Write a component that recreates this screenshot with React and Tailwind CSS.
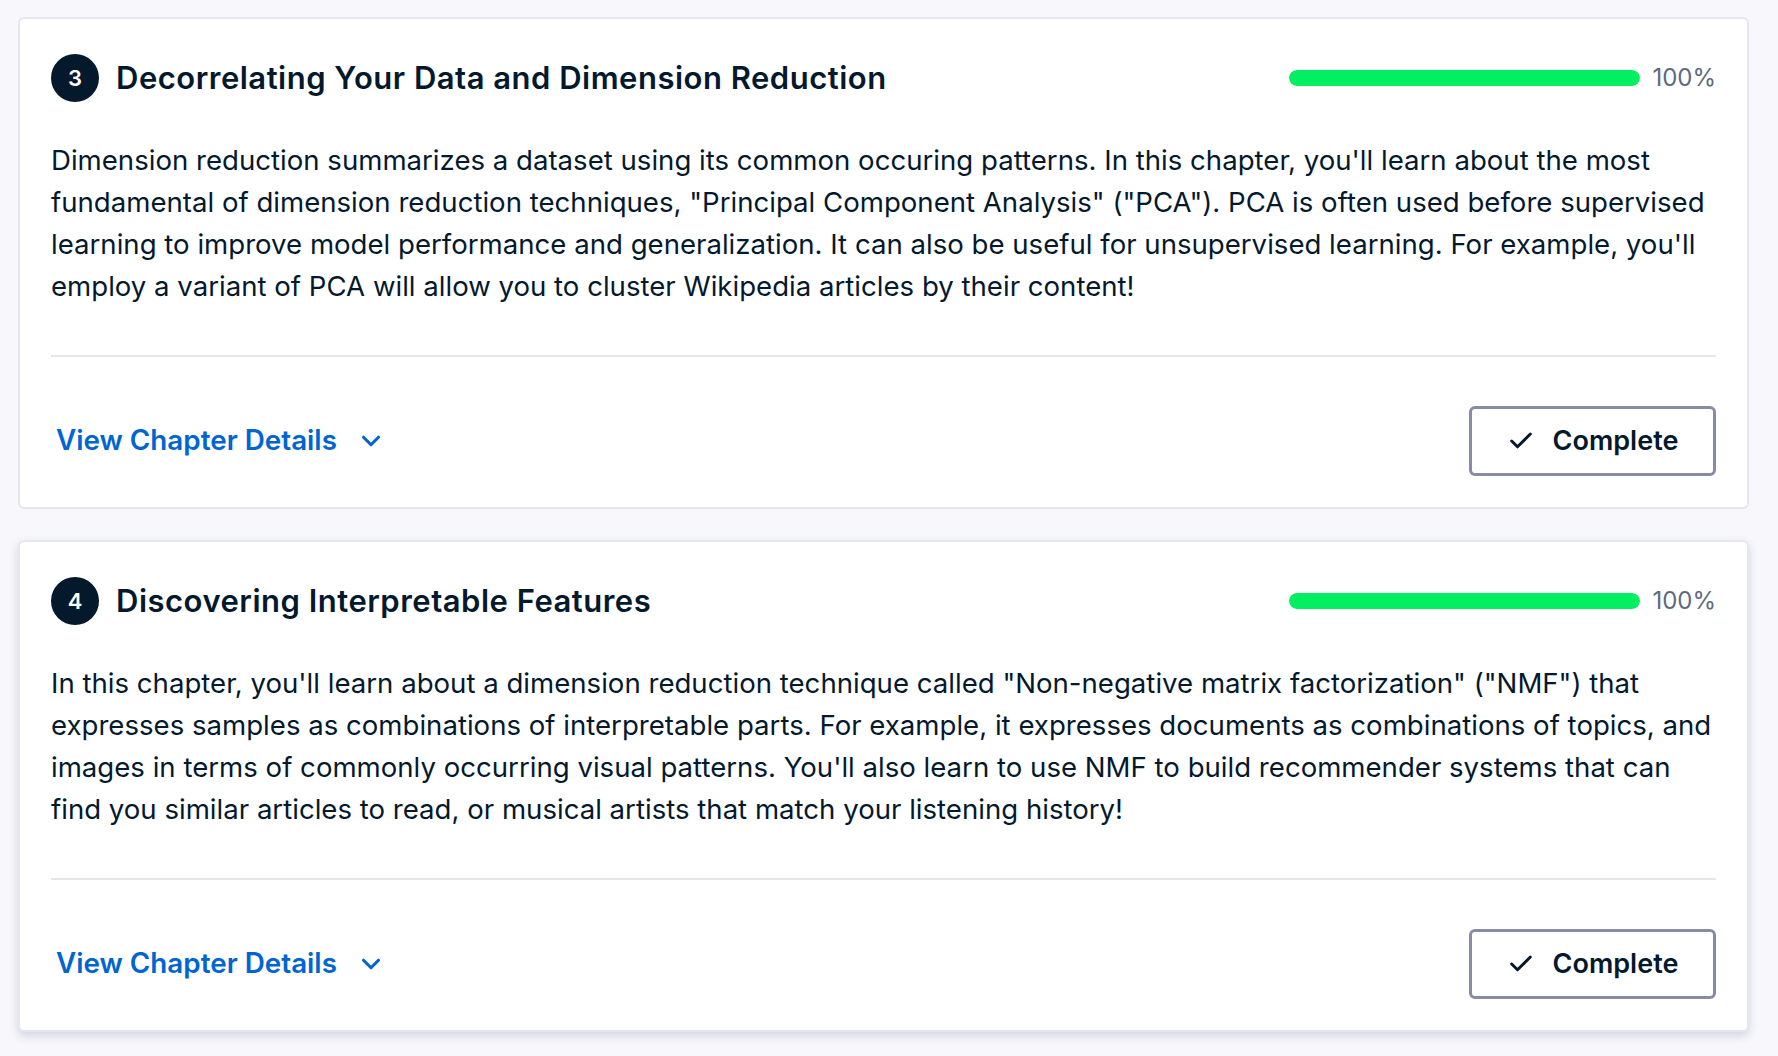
import React from "react";
import { Check, ChevronDown } from "lucide-react";

const chapters = [
  {
    number: 3,
    title: "Decorrelating Your Data and Dimension Reduction",
    progress: 100,
    lines: [
      "Dimension reduction summarizes a dataset using its common occuring patterns. In this chapter, you'll learn about the most",
      'fundamental of dimension reduction techniques, "Principal Component Analysis" ("PCA"). PCA is often used before supervised',
      "learning to improve model performance and generalization. It can also be useful for unsupervised learning. For example, you'll",
      "employ a variant of PCA will allow you to cluster Wikipedia articles by their content!",
    ],
    hovered: false,
  },
  {
    number: 4,
    title: "Discovering Interpretable Features",
    progress: 100,
    lines: [
      'In this chapter, you\'ll learn about a dimension reduction technique called "Non-negative matrix factorization" ("NMF") that',
      "expresses samples as combinations of interpretable parts. For example, it expresses documents as combinations of topics, and",
      "images in terms of commonly occurring visual patterns. You'll also learn to use NMF to build recommender systems that can",
      "find you similar articles to read, or musical artists that match your listening history!",
    ],
    hovered: true,
  },
];

const ChapterCard = ({ chapter }) => {
  return (
    <div
      className={`w-[1731px] bg-white border-2 border-[#e6e6ee] rounded-[6px] px-[31px] pt-[35px] pb-[31px] ${
        chapter.hovered ? "shadow-[0_4px_10px_rgba(48,57,105,0.18)]" : ""
      }`}
    >
      {/* header */}
      <div className="flex items-center h-[48px]">
        <div className="w-[48px] h-[48px] rounded-full bg-[#05192d] text-white flex items-center justify-center text-[22px] font-semibold shrink-0">
          {chapter.number}
        </div>
        <h2 className="ml-[17px] text-[31px] font-semibold text-[#05192d] tracking-[0.5px] flex-1">
          {chapter.title}
        </h2>
        <div className="flex items-center">
          <div className="w-[351px] h-[16px] rounded-full bg-[#e6e6ee] overflow-hidden">
            <div
              className="h-full rounded-full bg-[#03ef62]"
              style={{ width: `${chapter.progress}%` }}
            />
          </div>
          <span className="ml-[12px] text-[24px] text-[#5d6a7e] w-[64px] text-right">
            {chapter.progress}%
          </span>
        </div>
      </div>

      {/* description */}
      <p className="mt-[37px] text-[27.6px] leading-[42px] text-[#05192d]">
        {chapter.lines.map((line, i) => (
          <span key={i} className="block whitespace-nowrap">
            {line}
          </span>
        ))}
      </p>

      <div className="mt-[48px] h-[2px] bg-[#e6e6ee]" />

      {/* footer */}
      <div className="mt-[49px] flex items-center justify-between">
        <button className="flex items-center ml-[5px] text-[#0065d1] text-[27.8px] font-semibold">
          View Chapter Details
          <ChevronDown className="ml-[19px] w-[30px] h-[30px]" strokeWidth={2.5} />
        </button>
        <button className="w-[247px] h-[70px] border-[3px] border-[#878ba6] rounded-[6px] flex items-center justify-center text-[#05192d] text-[27px] font-semibold">
          <Check className="w-[28px] h-[28px]" strokeWidth={2.5} />
          <span className="ml-[18px]">Complete</span>
        </button>
      </div>
    </div>
  );
};

const App = () => {
  return (
    <div
      className="min-h-screen bg-[#f7f7fc] pl-[18px] pt-[17px] flex flex-col gap-[31px]"
      style={{ fontFamily: '"Inter", "Liberation Sans", sans-serif' }}
    >
      {chapters.map((chapter) => (
        <ChapterCard key={chapter.number} chapter={chapter} />
      ))}
    </div>
  );
};

export default App;
